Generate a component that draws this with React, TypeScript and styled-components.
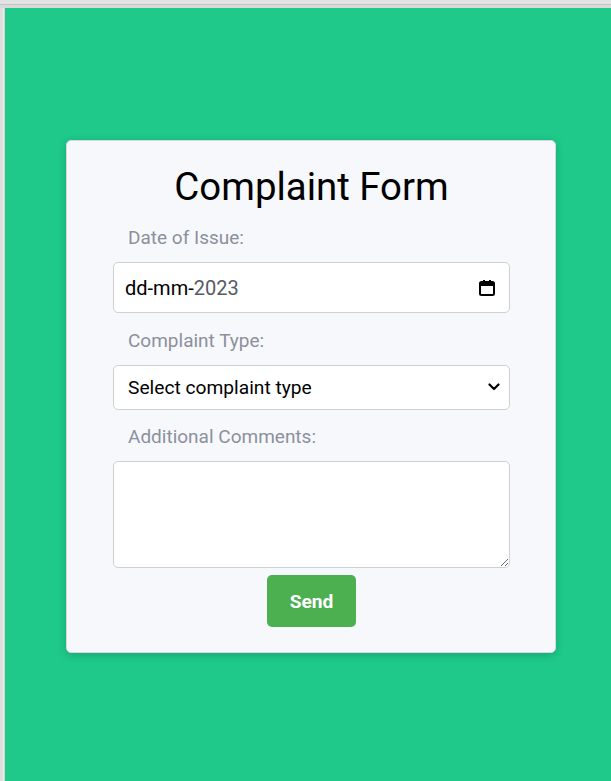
import React from "react";
import styled, { createGlobalStyle } from "styled-components";

const GlobalStyle = createGlobalStyle`
  html, body { margin: 0; padding: 0; height: 100%; }
  body { font-family: Roboto, "Liberation Sans", sans-serif; background: #e2e2e2; }
  #root { height: 100%; }
  * { box-sizing: border-box; }
`;

const Frame = styled.div`
  display: grid;
  grid-template-rows: 8px 1fr;
  height: 781px;
  overflow: hidden;
`;

const TopBar = styled.div`
  background: linear-gradient(to bottom, #e3e3e3 0 4px, #c4c4c4 4px 5px, #d9d9d9 5px 8px);
`;

const Body = styled.div`
  display: grid;
  grid-template-columns: 5px 1fr;
`;

const SideBar = styled.div`
  background: linear-gradient(to right, #dedede 0 3px, #ececec 3px 4px, #d4d4d4 4px 5px);
`;

const Page = styled.main`
  background: #1ec98a;
  display: flex;
  justify-content: center;
  align-items: flex-start;
  padding: 132px 0 0 0;
`;

const Card = styled.form`
  width: 490px;
  margin-left: 6px;
  background: #f7f8fc;
  border: 1px solid #d6d9de;
  border-radius: 5px;
  box-shadow: 0 2px 8px rgba(0, 0, 0, 0.18);
  padding: 24px 45px 25px 46px;
  display: flex;
  flex-direction: column;
`;

const Title = styled.h1`
  margin: 0 0 18px 0;
  font-family: Roboto, "Liberation Sans", sans-serif;
  font-weight: 400;
  font-size: 38.4px;
  line-height: 44px;
  color: #000;
  text-align: center;
`;

const Label = styled.label`
  display: block;
  font-size: 19px;
  line-height: 21px;
  color: #8b909c;
  padding-left: 15px;
  margin-bottom: 14px;
`;

const Field = styled.div<{ h: number }>`
  height: ${(p) => p.h}px;
  flex: none;
  background: #fff;
  border: 1px solid #cfd0d4;
  border-radius: 5px;
  display: flex;
  align-items: center;
  justify-content: space-between;
  padding: 0 14px 0 11px;
  margin-bottom: 17px;
  font-size: 20px;
  color: #000;
`;

const Faded = styled.span`
  color: #555a64;
`;

const SelectWrap = styled.div`
  position: relative;
  margin-bottom: 16px;
`;

const Select = styled.select`
  appearance: none;
  height: 45px;
  width: 100%;
  background: #fff;
  border: 1px solid #cfd0d4;
  border-radius: 5px;
  padding: 0 36px 0 14px;
  font-family: Roboto, "Liberation Sans", sans-serif;
  font-size: 19.2px;
  color: #000;
  display: block;
`;

const Chevron = styled.svg`
  position: absolute;
  right: 10px;
  top: 18px;
  pointer-events: none;
`;

const TextArea = styled.textarea`
  height: 107px;
  width: 100%;
  flex: none;
  background: #fff;
  border: 1px solid #cfd0d4;
  border-radius: 5px;
  margin: 0 0 7px 0;
  font-family: Roboto, "Liberation Sans", sans-serif;
  font-size: 16px;
  display: block;
`;

const SendButton = styled.button`
  align-self: center;
  width: 89px;
  height: 52px;
  background: #4caf50;
  color: #fff;
  border: none;
  border-radius: 5px;
  font-family: Roboto, "Liberation Sans", sans-serif;
  font-weight: 700;
  font-size: 19.2px;
`;

const CalendarIcon = () => (
  <svg width="16" height="18" viewBox="0 0 16 18">
    <rect x="1" y="3" width="14" height="13" rx="1.5" fill="none" stroke="#000" strokeWidth="2" />
    <rect x="1" y="3" width="14" height="4" fill="#000" />
    <rect x="4" y="1" width="2" height="3" fill="#000" />
    <rect x="10" y="1" width="2" height="3" fill="#000" />
  </svg>
);

export default function App() {
  return (
    <>
      <GlobalStyle />
      <Frame>
        <TopBar />
        <Body>
          <SideBar />
          <Page>
            <Card onSubmit={(e) => e.preventDefault()}>
              <Title>Complaint Form</Title>
              <Label>Date of Issue:</Label>
              <Field h={51}>
                <span>
                  dd-mm-<Faded>2023</Faded>
                </span>
                <CalendarIcon />
              </Field>
              <Label>Complaint Type:</Label>
              <SelectWrap>
                <Select defaultValue="">
                  <option value="">Select complaint type</option>
                  <option value="service">Service</option>
                  <option value="billing">Billing</option>
                </Select>
                <Chevron width="12" height="8" viewBox="0 0 12 8">
                  <path d="M1.5 1.5 L6 6 L10.5 1.5" fill="none" stroke="#000" strokeWidth="2.2" strokeLinecap="round" strokeLinejoin="round" />
                </Chevron>
              </SelectWrap>
              <Label>Additional Comments:</Label>
              <TextArea />
              <SendButton type="submit">Send</SendButton>
            </Card>
          </Page>
        </Body>
      </Frame>
    </>
  );
}
